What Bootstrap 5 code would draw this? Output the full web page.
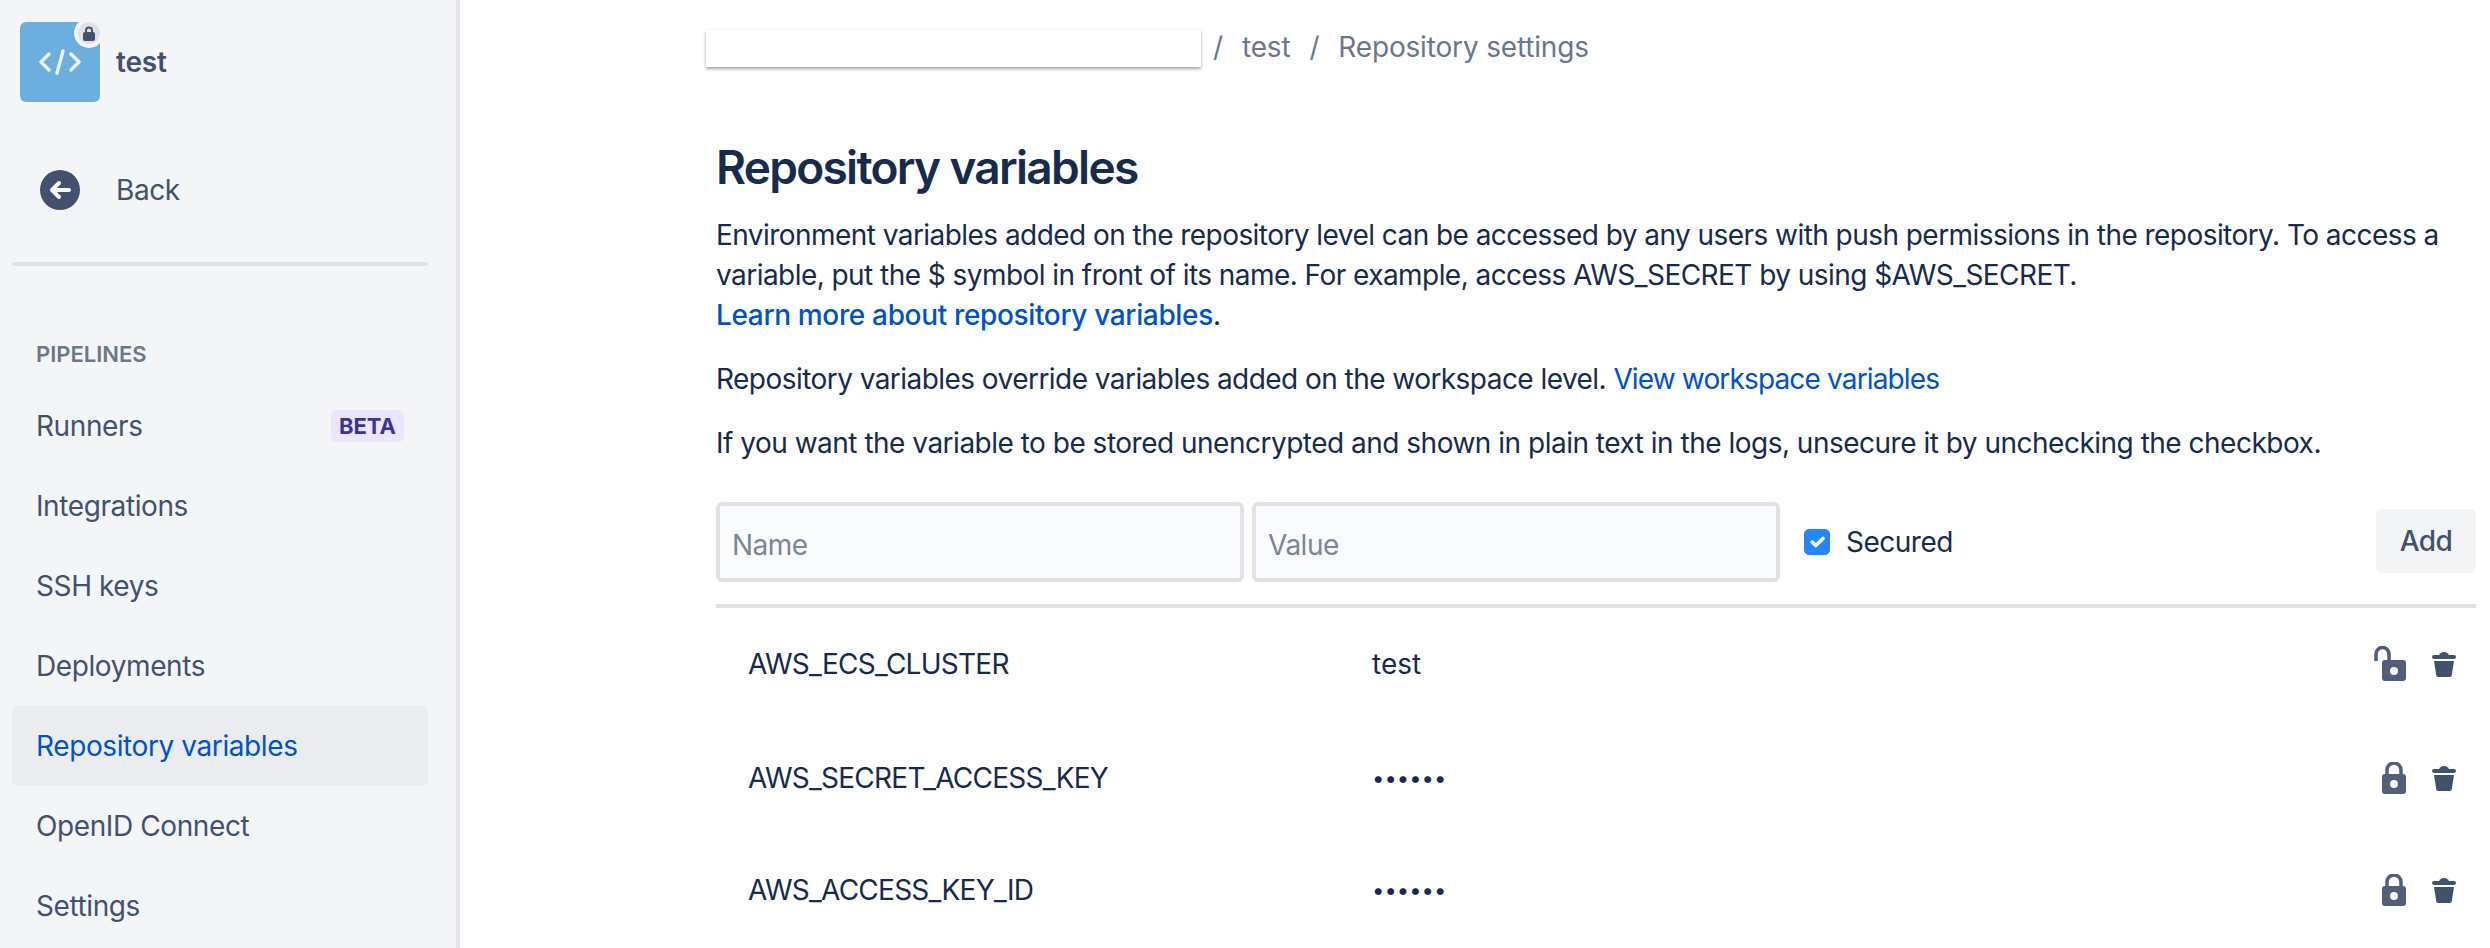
<!DOCTYPE html>
<html lang="en">
<head>
    <meta charset="UTF-8">
    <title>Repository variables</title>
    <link href="https://cdn.jsdelivr.net/npm/bootstrap@5.3.2/dist/css/bootstrap.min.css" rel="stylesheet">
    <style>
        html, body { height: 100%; overflow: hidden; }
        body { font-family: Inter, "Liberation Sans", sans-serif; font-size: 28px; line-height: 40px; letter-spacing: -.5px; color: #172B4D; background: #fff; }
        a { text-decoration: none; color: #0052CC; }

        .side-panel { width: 460px; flex: none; background: #F4F5F7; border-right: 4px solid #DFE1E6; padding: 22px 28px 0 12px; color: #42526E; letter-spacing: -.4px; }
        .repo-head { height: 80px; padding-left: 8px; gap: 16px; }
        .repo-tile { width: 80px; height: 80px; background: #6CAEDE; border-radius: 6px; position: relative; }
        .repo-badge { position: absolute; top: 0; right: 0; width: 22px; height: 22px; border-radius: 50%; background: #DFE1E6; box-shadow: 0 0 0 4px #F4F5F7; }
        .repo-name { font-weight: 600; letter-spacing: -.2px; color: #42526E; }
        .back-row { height: 40px; margin-top: 68px; padding-left: 28px; gap: 36px; color: #42526E; }
        .side-rule { height: 4px; margin: 52px 0 0; background: #DFE1E6; border-radius: 2px; opacity: 1; border: 0; }
        .side-title { font-size: 22px; line-height: 28px; font-weight: 600; letter-spacing: 0; color: #6B778C; margin: 74px 0 0 24px; }
        .side-nav { margin-top: 18px; }
        .side-nav .nav-link { height: 80px; padding: 0 24px; color: #42526E; border-radius: 6px; }
        .side-nav .nav-link.active { background: #EBECF0; color: #0052CC; }
        .beta-tag { font-size: 22px; line-height: 32px; font-weight: 700; letter-spacing: 0; color: #403294; background: #EAE6FF; border-radius: 6px; padding: 0 8px; }

        .main-pane { padding: 27px 14px 0 256px; min-width: 0; }
        .crumbs { height: 40px; letter-spacing: -.17px; }
        .crumb-mask { width: 495px; height: 37px; margin: 3px 0 0 -10px; background: #fff; box-shadow: 0 2px 3px rgba(0,0,0,.35), 0 0 2px rgba(0,0,0,.06); }
        .crumbs .breadcrumb { --bs-breadcrumb-divider-color: #6B778C; --bs-breadcrumb-item-active-color: #6B778C; --bs-breadcrumb-item-padding-x: 19px; --bs-breadcrumb-margin-bottom: 0; margin-left: -7px; color: #6B778C; }
        .crumbs .breadcrumb a { color: #6B778C; }
        .page-title { font-size: 46px; line-height: 56px; font-weight: 600; color: #172B4D; margin: 72px 0 20px; letter-spacing: -1.7px; }
        .intro { margin-bottom: 24px; letter-spacing: -.55px; }
        .learn-link { font-weight: 500; letter-spacing: -.35px; }
        .workspace-link { letter-spacing: -.85px; }

        .var-form { margin-top: 39px; height: 80px; }
        .var-input { width: 528px; height: 80px; font-size: 28px; line-height: 40px; padding: 6px 12px 0; letter-spacing: -.5px; background: #FAFBFC; border: 4px solid #DFE1E6; border-radius: 6px; color: #172B4D; }
        .var-input::placeholder { color: #7A869A; opacity: 1; }
        .secure-check { margin: 0 0 0 16px; padding: 0; min-height: 0; gap: 16px; }
        .secure-check .form-check-input { float: none; width: 26px; height: 26px; margin: 0; border-radius: 5px; background-color: #2684FF; border-color: #2684FF; }
        .add-btn { width: 100px; height: 64px; padding: 0; font-size: 28px; font-weight: 500; letter-spacing: -.5px; color: #42526E; background: #F4F5F7; border: 0; border-radius: 6px; margin-top: -2px; }
        .var-list { margin-top: 22px; border-top: 4px solid #DFE1E6; }
        .var-row { height: 112px; padding: 0 20px 0 32px; }
        .var-row:first-child { margin-bottom: 2px; }
        .var-key { width: 624px; flex: none; letter-spacing: -.75px; }
        .var-value { letter-spacing: 0; }
        .var-value.dots { font-size: 22px; }
        .var-actions { gap: 26px; }
    </style>
</head>
<body>
    <div class="d-flex vh-100">
        <aside class="side-panel">
            <div class="repo-head d-flex align-items-center">
                <div class="repo-tile d-flex align-items-center justify-content-center">
                    <svg width="42" height="26" viewBox="0 0 42 26" fill="none" stroke="#fff" stroke-width="3.4" stroke-linecap="round" stroke-linejoin="round">
                        <path d="M10 5 2 13l8 8M32 5l8 8-8 8M24 2l-6 22" opacity=".85"/>
                    </svg>
                    <span class="repo-badge d-flex align-items-center justify-content-center">
                        <svg width="12" height="15" viewBox="0 0 12 15"><path d="M3 7V4.500a3 3 0 0 1 6 0V7" fill="none" stroke="#42526E" stroke-width="2"/><rect y="6" width="12" height="9" rx="2" fill="#42526E"/></svg>
                    </span>
                </div>
                <span class="repo-name">test</span>
            </div>
            <a href="#" class="back-row d-flex align-items-center">
                <svg width="40" height="40" viewBox="0 0 40 40"><circle cx="20" cy="20" r="20" fill="#42526E"/><path d="M29 20H12M19 13l-7 7 7 7" fill="none" stroke="#fff" stroke-width="4" stroke-linecap="round" stroke-linejoin="round"/></svg>
                <span>Back</span>
            </a>
            <hr class="side-rule">
            <div class="side-title">PIPELINES</div>
            <nav class="nav flex-column side-nav">
                <a class="nav-link d-flex align-items-center justify-content-between" href="#">Runners <span class="beta-tag">BETA</span></a>
                <a class="nav-link d-flex align-items-center" href="#">Integrations</a>
                <a class="nav-link d-flex align-items-center" href="#">SSH keys</a>
                <a class="nav-link d-flex align-items-center" href="#">Deployments</a>
                <a class="nav-link active d-flex align-items-center" href="#">Repository variables</a>
                <a class="nav-link d-flex align-items-center" href="#">OpenID Connect</a>
                <a class="nav-link d-flex align-items-center" href="#">Settings</a>
            </nav>
        </aside>

        <main class="main-pane flex-grow-1">
            <div class="crumbs d-flex align-items-center">
                <div class="crumb-mask"></div>
                <ol class="breadcrumb">
                    <li class="breadcrumb-item"></li>
                    <li class="breadcrumb-item"><a href="#">test</a></li>
                    <li class="breadcrumb-item active">Repository settings</li>
                </ol>
            </div>

            <h1 class="page-title">Repository variables</h1>
            <p class="intro">Environment variables added on the repository level can be accessed by any users with push permissions in the repository. To access a variable, put the $ symbol in front of its name. For example, access AWS_SECRET by using $AWS_SECRET.<br><a class="learn-link" href="#">Learn more about repository variables</a>.</p>
            <p class="intro">Repository variables override variables added on the workspace level. <a class="workspace-link" href="#">View workspace variables</a></p>
            <p class="mb-0">If you want the variable to be stored unencrypted and shown in plain text in the logs, unsecure it by unchecking the checkbox.</p>

            <form class="var-form d-flex align-items-center gap-2">
                <input class="form-control var-input" type="text" placeholder="Name">
                <input class="form-control var-input" type="text" placeholder="Value">
                <div class="form-check secure-check d-flex align-items-center">
                    <input class="form-check-input" type="checkbox" id="secured" checked>
                    <label class="form-check-label" for="secured">Secured</label>
                </div>
                <button class="btn add-btn ms-auto" type="button">Add</button>
            </form>

            <div class="var-list" id="var-list"></div>
        </main>
    </div>

    <script>
        const variables = [
            { name: 'AWS_ECS_CLUSTER', value: 'test', secured: false },
            { name: 'AWS_SECRET_ACCESS_KEY', value: '••••••', secured: true },
            { name: 'AWS_ACCESS_KEY_ID', value: '••••••', secured: true }
        ];

        const lockIcon = `<svg width="24" height="32" viewBox="0 0 24 32"><path d="M5 14V8a7 7 0 0 1 14 0v6" fill="none" stroke="#505F79" stroke-width="3.5"/><rect y="12" width="24" height="20" rx="3" fill="#505F79"/><circle cx="12" cy="22" r="4" fill="#fff"/></svg>`;
        const openLockIcon = `<svg width="32" height="36" viewBox="0 0 32 36" style="margin-left:-8px"><path d="M2 15V8a6.500 6.500 0 0 1 13 0v6" fill="none" stroke="#505F79" stroke-width="3.500"/><rect x="8" y="14" width="24" height="21" rx="3" fill="#505F79"/><circle cx="20" cy="25" r="4" fill="#fff"/></svg>`;
        const trashIcon = `<svg width="24" height="25" viewBox="0 0 24 25" fill="#42526E"><rect y="3" width="24" height="4" rx="2"/><path d="M7 4a5 4 0 0 1 10 0z"/><path d="M2 9h20l-2.200 14a2 2 0 0 1-2 2H6.200a2 2 0 0 1-2-2z"/></svg>`;

        document.getElementById('var-list').innerHTML = variables.map(v => `
            <div class="var-row d-flex align-items-center">
                <div class="var-key">${v.name}</div>
                <div class="var-value flex-grow-1${v.secured ? ' dots' : ''}">${v.value}</div>
                <div class="var-actions d-flex align-items-center">${v.secured ? lockIcon : openLockIcon}${trashIcon}</div>
            </div>`).join('');
    </script>
    <script src="https://cdn.jsdelivr.net/npm/bootstrap@5.3.2/dist/js/bootstrap.bundle.min.js"></script>
</body>
</html>
